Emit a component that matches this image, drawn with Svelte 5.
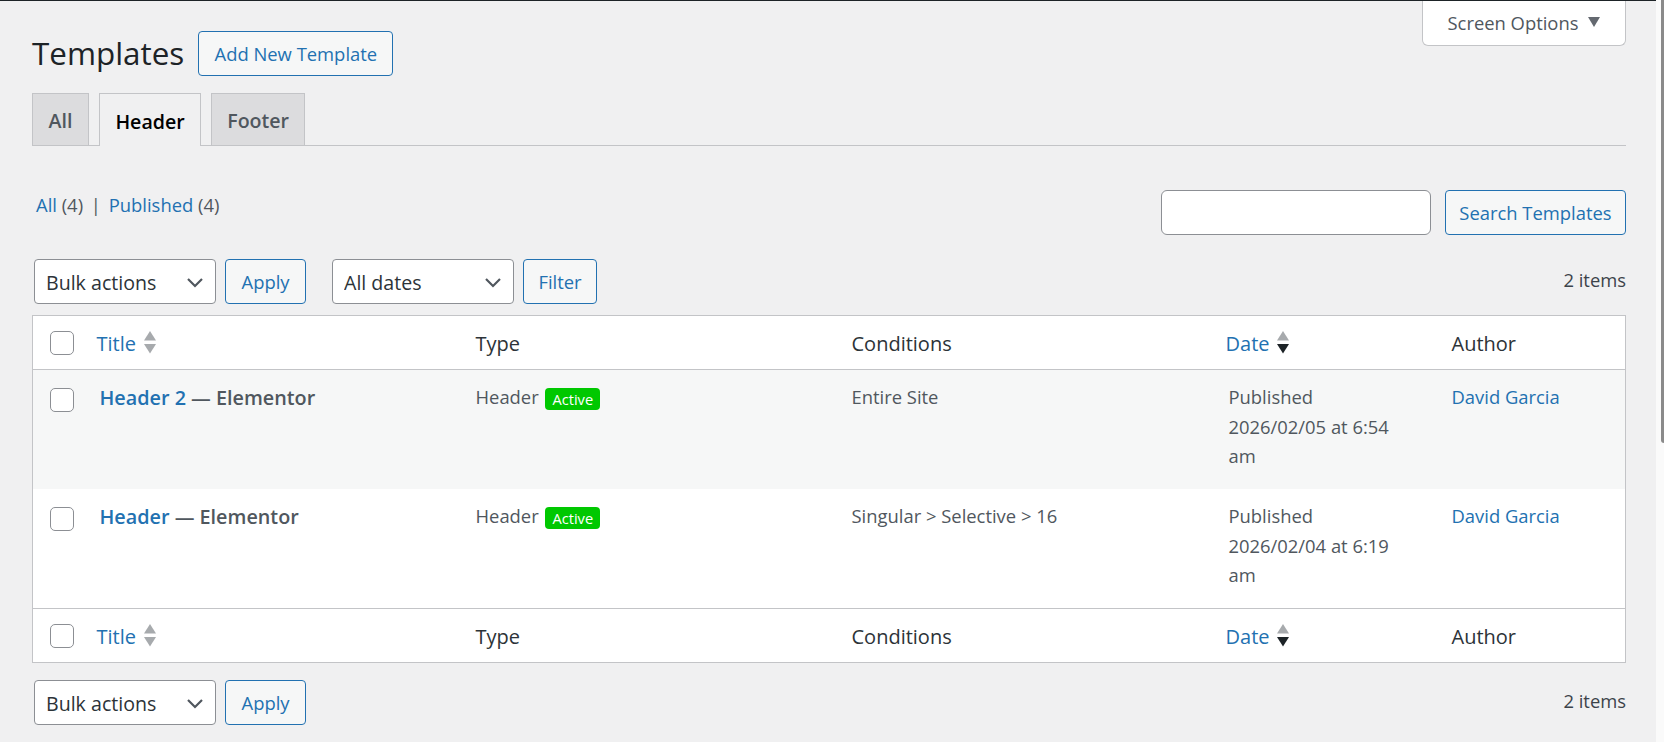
<script lang="ts">
	const rows = [
		{ title: 'Header 2', cond: 'Entire Site', date: '2026/02/05 at 6:54 am' },
		{ title: 'Header', cond: 'Singular > Selective > 16', date: '2026/02/04 at 6:19 am' }
	];
	const columns = ['Type', 'Conditions'];
</script>

{#snippet sorter(active)}
	<svg class="sorter" width="12" height="23" viewBox="0 0 12 23" aria-hidden="true">
		<path d="M6 0 L12 9.5 H0 Z" fill="#a7aaad" />
		<path d="M0 13 H12 L6 22.5 Z" fill={active ? '#1d2327' : '#a7aaad'} />
	</svg>
{/snippet}

{#snippet headRow()}
	<tr>
		<th class="cb"><span class="check"></span></th>
		<th><a href="#t" class="sort">Title {@render sorter(false)}</a></th>
		{#each columns as c}
			<th>{c}</th>
		{/each}
		<th class="datehead"><a href="#d" class="sort">Date {@render sorter(true)}</a></th>
		<th>Author</th>
	</tr>
{/snippet}

{#snippet bulk()}
	<select class="select"><option>Bulk actions</option></select>
	<button class="btn apply">Apply</button>
{/snippet}

<div class="bar"></div>
<div class="scroll"><div class="thumb"></div></div>

<div class="wrap">
	<header>
		<div class="titlerow">
			<h1>Templates</h1>
			<button class="btn add">Add New Template</button>
		</div>
		<button class="options">Screen Options <i></i></button>
	</header>

	<nav class="tabs">
		<a href="#all">All</a>
		<a href="#header" class="active">Header</a>
		<a href="#footer">Footer</a>
	</nav>

	<div class="filters">
		<div class="subsub"><a href="#a">All</a> (4) <span class="sep">|</span> <a href="#p">Published</a> (4)</div>
		<div class="search">
			<input type="text" />
			<button class="btn searchbtn">Search Templates</button>
		</div>
	</div>

	<div class="tablenav">
		{@render bulk()}
		<select class="select dates"><option>All dates</option></select>
		<button class="btn filter">Filter</button>
		<span class="count">2 items</span>
	</div>

	<table>
		<colgroup>
			<col style="width:51px" />
			<col style="width:381px" />
			<col style="width:376px" />
			<col style="width:375px" />
			<col style="width:225px" />
			<col />
		</colgroup>
		<thead>{@render headRow()}</thead>
		<tbody>
			{#each rows as r, i}
				<tr class:alt={i === 0}>
					<td class="cb"><span class="check"></span></td>
					<td class="name"><a href="#e">{r.title}</a> — Elementor</td>
					<td>Header <span class="badge">Active</span></td>
					<td>{r.cond}</td>
					<td class="date">Published<br />{r.date}</td>
					<td><a href="#u">David Garcia</a></td>
				</tr>
			{/each}
		</tbody>
		<tfoot>{@render headRow()}</tfoot>
	</table>

	<div class="tablenav bottom">
		{@render bulk()}
		<span class="count">2 items</span>
	</div>
</div>

<style>
	:global(body) {
		margin: 0;
		height: 742px;
		overflow: hidden;
		background: #f0f0f1;
		font-family: 'Open Sans', sans-serif;
		font-size: 18.4px;
		color: #3c434a;
	}

	a {
		color: #2271b1;
		text-decoration: none;
	}

	.bar {
		height: 1px;
		background: #1d2327;
		margin-right: 8px;
	}

	.scroll {
		position: absolute;
		top: 0;
		right: 0;
		bottom: 0;
		width: 8px;
		background: #fafafa;
	}

	.thumb {
		position: absolute;
		top: 0;
		right: 0;
		width: 3px;
		height: 443px;
		background: #8a8a8a;
		border-radius: 0 0 0 3px;
	}

	.wrap {
		padding: 0 38px 0 32px;
	}

	header {
		display: flex;
		justify-content: space-between;
		align-items: flex-start;
	}

	.titlerow {
		display: flex;
		align-items: center;
		gap: 14px;
		margin-top: 30px;
	}

	h1 {
		margin: 0;
		padding-bottom: 2px;
		font-size: 31.4px;
		font-weight: 400;
		line-height: 42px;
		color: #1d2327;
	}

	.btn {
		height: 45px;
		padding: 0;
		border: 1px solid #2271b1;
		border-radius: 4px;
		background: #f6f7f7;
		color: #2271b1;
		font: inherit;
		white-space: nowrap;
	}

	.add {
		width: 195px;
	}

	.options {
		width: 204px;
		height: 45px;
		padding: 0 0 2px;
		border: 1px solid #c3c4c7;
		border-top: 0;
		border-radius: 0 0 6px 6px;
		background: #fff;
		color: #50575e;
		font: inherit;
		display: flex;
		align-items: center;
		justify-content: center;
		gap: 10px;
	}

	.options i {
		border: 6px solid transparent;
		border-top: 10px solid #646970;
		border-bottom: 0;
	}

	.tabs {
		display: flex;
		gap: 10.5px;
		margin-top: 17px;
		height: 52px;
		border-bottom: 1px solid #c3c4c7;
	}

	.tabs a {
		display: flex;
		align-items: center;
		padding: 2px 15px 0;
		height: 52px;
		box-sizing: border-box;
		border: 1px solid #c3c4c7;
		border-bottom: 0;
		background: #dcdcde;
		color: #50575e;
		font-weight: 600;
		font-size: 19.6px;
	}

	.tabs a:first-child {
		padding: 2px 15.5px 0;
	}

	.tabs a.active {
		height: 53px;
		background: #f0f0f1;
		color: #000;
	}

	.filters {
		display: flex;
		justify-content: space-between;
		margin-top: 44px;
	}

	.subsub {
		margin: 2px 0 0 4px;
		line-height: 26px;
		color: #50575e;
	}

	.sep {
		margin: 0 3px;
		color: #50575e;
	}

	.search {
		display: flex;
		gap: 14px;
	}

	input {
		width: 270px;
		height: 45px;
		box-sizing: border-box;
		border: 1px solid #8c8f94;
		border-radius: 6px;
		background: #fff;
	}

	.searchbtn {
		width: 181px;
	}

	.tablenav {
		display: flex;
		align-items: center;
		gap: 9px;
		margin-top: 24px;
		padding-left: 2px;
	}

	.select {
		appearance: none;
		width: 182px;
		height: 45px;
		padding: 2px 11px 0;
		border: 1px solid #8c8f94;
		border-radius: 4px;
		background: #fff url("data:image/svg+xml,%3Csvg xmlns='http://www.w3.org/2000/svg' viewBox='0 0 20 20'%3E%3Cpath d='M3 7l7 7 7-7' fill='none' stroke='%2350575e' stroke-width='2.2'/%3E%3C/svg%3E") no-repeat right 10px center / 20px;
		color: #2c3338;
		font-family: inherit;
		font-size: 19.6px;
	}

	.apply {
		width: 81px;
	}

	.dates {
		margin-left: 17px;
	}

	.filter {
		width: 74px;
	}

	.count {
		margin-left: auto;
		align-self: flex-start;
		line-height: 42px;
	}

	table {
		width: 100%;
		margin-top: 11px;
		table-layout: fixed;
		border-collapse: collapse;
		border: 1px solid #c3c4c7;
		background: #fff;
		line-height: 29.5px;
	}

	th,
	td {
		padding: 12px 11px 11px;
		text-align: left;
		vertical-align: top;
		font-weight: 400;
		color: #50575e;
	}

	th {
		height: 54px;
		box-sizing: border-box;
		vertical-align: middle;
		padding: 2px 11px 0;
		color: #2c3338;
		font-size: 20px;
	}

	thead th {
		border-bottom: 1px solid #c3c4c7;
	}

	tfoot th {
		border-top: 1px solid #c3c4c7;
	}

	tbody tr {
		height: 119.5px;
	}

	tr.alt {
		background: #f6f7f7;
	}

	.cb {
		padding: 0 0 0 17px;
	}

	td.cb {
		padding-top: 18px;
	}

	.check {
		display: block;
		width: 24px;
		height: 24px;
		box-sizing: border-box;
		border: 1px solid #8c8f94;
		border-radius: 5px;
		background: #fff;
	}

	.sort {
		display: inline-flex;
		align-items: center;
		gap: 8px;
		margin-left: 2px;
	}

	.datehead .sort {
		margin-left: -1px;
	}

	.sorter {
		margin-top: -3px;
	}

	.name {
		padding: 13px 11px 11px 16px;
		font-size: 19.8px;
		font-weight: 600;
	}

	.name a {
		font-weight: 600;
	}

	.date {
		padding: 12px 30px 11px 13px;
	}

	.badge {
		display: inline-block;
		padding: 0 7px;
		margin-left: 2px;
		border-radius: 4px;
		background: #00c800;
		color: #fff;
		font-size: 14.6px;
		line-height: 22px;
		vertical-align: -1px;
	}

	.bottom {
		margin-top: 17px;
	}
</style>
